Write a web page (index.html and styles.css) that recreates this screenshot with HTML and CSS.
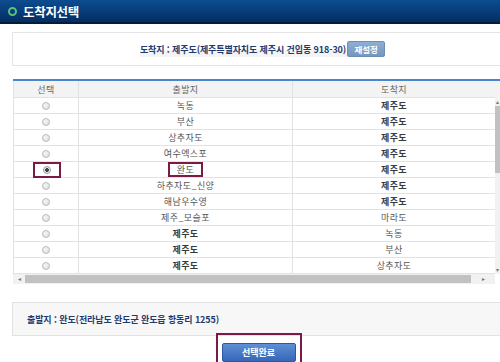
FILE: index.html
```html
<!DOCTYPE html>
<html lang="ko">
<head>
<meta charset="utf-8">
<link rel="stylesheet" href="styles.css">
</head>
<body>
<div class="hdr"><span class="ring"></span><span class="title">도착지선택</span></div>
<div class="info">
  <div class="strip"><span class="txt">도착지 : 제주도(제주특별자치도 제주시 건입동 918-30)</span><span class="btn-reset">재설정</span></div>
</div>
<div class="tbl">
  <div class="topline"></div>
  <div class="main">
    <div class="grid">
      <div class="row head"><div class="c1">선택</div><div class="c2">출발지</div><div class="c3">도착지</div></div>
      <div class="row"><div class="c1"><span class="radio"></span></div><div class="c2">녹동</div><div class="c3 b">제주도</div></div>
      <div class="row"><div class="c1"><span class="radio"></span></div><div class="c2">부산</div><div class="c3 b">제주도</div></div>
      <div class="row"><div class="c1"><span class="radio"></span></div><div class="c2">상추자도</div><div class="c3 b">제주도</div></div>
      <div class="row"><div class="c1"><span class="radio"></span></div><div class="c2">여수엑스포</div><div class="c3 b">제주도</div></div>
      <div class="row"><div class="c1"><span class="mark mr"><span class="radio on"></span></span></div><div class="c2"><span class="mark mt">완도</span></div><div class="c3 b">제주도</div></div>
      <div class="row"><div class="c1"><span class="radio"></span></div><div class="c2">하추자도_신양</div><div class="c3 b">제주도</div></div>
      <div class="row"><div class="c1"><span class="radio"></span></div><div class="c2">해남우수영</div><div class="c3 b">제주도</div></div>
      <div class="row"><div class="c1"><span class="radio"></span></div><div class="c2">제주_모슬포</div><div class="c3">마라도</div></div>
      <div class="row"><div class="c1"><span class="radio"></span></div><div class="c2 b">제주도</div><div class="c3">녹동</div></div>
      <div class="row"><div class="c1"><span class="radio"></span></div><div class="c2 b">제주도</div><div class="c3">부산</div></div>
      <div class="row"><div class="c1"><span class="radio"></span></div><div class="c2 b">제주도</div><div class="c3">상추자도</div></div>
    </div>
    <div class="vbar"><div class="vtop"></div><div class="up">&#9652;</div><div class="vthumb"></div><div class="vrest"></div><div class="down">&#9662;</div></div>
  </div>
  <div class="hbar"><span class="arr">&#9666;</span><div class="hthumb"></div><span class="arr">&#9656;</span><div class="corner"></div></div>
</div>
<div class="foot"><span class="txt">출발지 : 완도(전라남도 완도군 완도읍 항동리 1255)</span></div>
<div class="actions"><div class="bmark"><span class="btn-ok">선택완료</span></div></div>
</body>
</html>
```
FILE: styles.css
```css
* { box-sizing: border-box; }
body {
  margin: 0;
  width: 500px;
  height: 362px;
  overflow: hidden;
  background: #fff;
  font-family: "Noto Sans CJK KR", "Noto Sans", sans-serif;
  font-size: 9px;
  color: #555;
}
.hdr {
  height: 24px;
  background: linear-gradient(#0c4d8f, #063a76 60%, #052d60);
  border-bottom: 2px solid #031c3e;
  display: flex;
  align-items: center;
  padding-left: 8px;
}
.ring {
  width: 9px; height: 9px;
  border: 2.5px solid #5cc07a;
  border-radius: 50%;
  margin-right: 6px;
}
.title {
  color: #fff;
  font-size: 12.5px;
  font-weight: bold;
  letter-spacing: -0.3px;
}
.info {
  margin: 8px 0 0 12px;
  height: 34px;
  border: 1px solid #e4e4e4;
  border-right: none;
  display: flex;
  align-items: center;
  justify-content: center;
  padding-left: 12px;
}
.strip {
  display: flex;
  align-items: center;
  background: linear-gradient(transparent 55%, #f4f4f4 55%);
}
.info .txt, .foot .txt {
  color: #1f3a6e;
  font-weight: bold;
  font-size: 9px;
  letter-spacing: -0.1px;
}
.btn-reset {
  margin-left: 1px;
  width: 38px; height: 16px;
  background: linear-gradient(#8eaed2, #7597bf);
  border: 1px solid #6c8db5;
  border-radius: 2px;
  color: #fff;
  font-weight: bold;
  font-size: 8.5px;
  display: flex; align-items: center; justify-content: center;
}
.tbl {
  margin: 13px 0 0 13px;
  width: 487px;
}
.topline { height: 2px; background: #4a86cc; }
.main { display: flex; }
.grid { width: 482px; }
.row {
  display: flex;
  height: 16px;
  border-bottom: 1px solid #e2e2e2;
}
.row.head { height: 17px; background: #f3f3f3; color: #666; }
.row > div {
  display: flex;
  align-items: center;
  justify-content: center;
  border-left: 1px solid #e2e2e2;
  letter-spacing: 0.4px;
}
.c1 { width: 65px; }
.c2 { width: 214px; }
.c3 { width: 203px; }
.b { font-weight: bold; color: #3a3a3a; }
.radio {
  width: 8px; height: 8px;
  border-radius: 50%;
  border: 1px solid #bbb;
  background: radial-gradient(circle at 40% 35%, #f8f8f8, #d8d8d8);
  display: block;
}
.radio.on {
  background: radial-gradient(circle, #444 0 1.6px, #f0f0f0 2.2px, #d8d8d8);
  border-color: #999;
}
.mark {
  border: 2px solid #7b1a45;
  display: flex;
  align-items: center;
  justify-content: center;
}
.mr { width: 28px; height: 16px; margin-left: 1px; }
.mt { width: 35px; height: 15px; }
.vbar {
  width: 5px;
  display: flex;
  flex-direction: column;
  background: #f1f1f1;
}
.vtop { height: 17px; background: #f3f3f3; }
.up, .down { height: 8px; font-size: 6px; line-height: 8px; color: #777; text-align: center; overflow: hidden; }
.vthumb { height: 67px; background: #c1c1c1; }
.vrest { flex: 1; }
.hbar {
  display: flex;
  align-items: center;
  height: 10px;
  background: #f1f1f1;
}
.arr { width: 12px; font-size: 6px; color: #777; text-align: center; line-height: 10px; }
.hthumb { width: 446px; height: 8px; background: #c1c1c1; }
.hbar .arr:last-of-type { width: 24px; }
.corner { width: 5px; height: 10px; background: #fff; }
.foot {
  margin: 18px 0 0 12px;
  height: 34px;
  background: #f7f7f7;
  border: 1px solid #e2e2e2;
  border-right: none;
  display: flex;
  align-items: center;
  padding-left: 14px;
}
.actions { display: flex; justify-content: center; margin-top: -3px; padding-left: 17px; }
.bmark {
  border: 2px solid #7b1a45;
  padding: 8px 4px 0 4px;
  height: 34px;
}
.btn-ok {
  width: 74px; height: 19px;
  background: linear-gradient(#5f8fd6, #3566b8);
  border: 1px solid #2c58a3;
  border-radius: 2px;
  color: #fff;
  font-weight: bold;
  font-size: 9px;
  display: flex; align-items: center; justify-content: center;
}
```
